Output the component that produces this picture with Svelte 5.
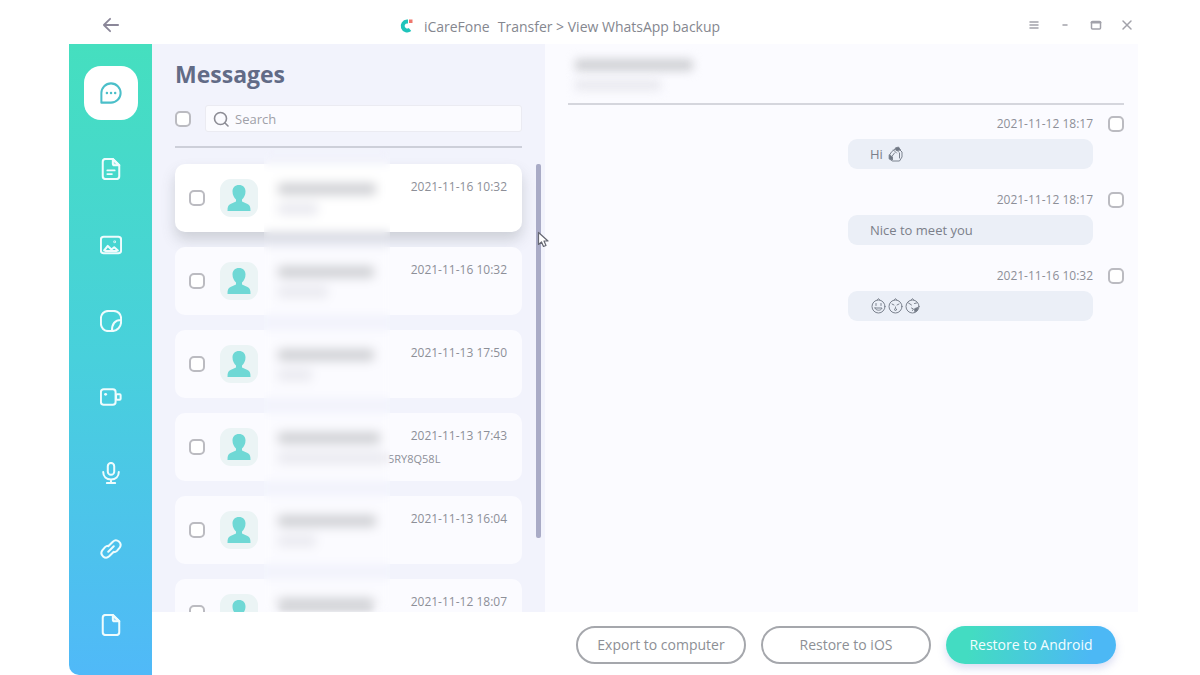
<script>
    let search = $state('');

    const nav = [
        { id: 'messages', label: 'Messages' },
        { id: 'documents', label: 'Documents' },
        { id: 'images', label: 'Images' },
        { id: 'stickers', label: 'Stickers' },
        { id: 'videos', label: 'Videos' },
        { id: 'audio', label: 'Audio' },
        { id: 'links', label: 'Links' },
        { id: 'files', label: 'Files' }
    ];
    let active = $state('messages');

    // name and preview are the widths of the blurred out text
    const chats = [
        { date: '2021-11-16 10:32', name: 98, preview: 40 },
        { date: '2021-11-16 10:32', name: 96, preview: 50 },
        { date: '2021-11-13 17:50', name: 96, preview: 34 },
        { date: '2021-11-13 17:43', name: 102, preview: 108, tail: '5RY8Q58L' },
        { date: '2021-11-13 16:04', name: 98, preview: 38 },
        { date: '2021-11-12 18:07', name: 96, preview: 40 }
    ];
    let selected = $state(0);

    const messages = [
        { date: '2021-11-12 18:17', text: 'Hi', icons: ['wave'] },
        { date: '2021-11-12 18:17', text: 'Nice to meet you', icons: [] },
        { date: '2021-11-16 10:32', text: '', icons: ['smile', 'wow', 'kiss'] }
    ];
</script>

{#snippet navIcon(id)}
    <svg class="nav-icon" viewBox="0 0 24 24" aria-hidden="true">
        {#if id === 'messages'}
            <path d="M1.5 22.5V12A10.5 10.5 0 1 1 12 22.5Z" />
            <path d="M7.5 12h.1M12 12h.1M16.5 12h.1" stroke-width="2.6" />
        {:else if id === 'documents'}
            <path d="M14 1H6A3 3 0 0 0 3 4v16a3 3 0 0 0 3 3h12a3 3 0 0 0 3-3V8Z" />
            <path d="M14 1v5a2 2 0 0 0 2 2h5Z" fill="#effcfd" fill-opacity=".5" />
            <path d="M8 13.5h8M8 17.5h5" stroke-width="2" />
        {:else if id === 'images'}
            <rect x="1" y="3" width="22" height="18" rx="3" />
            <path d="M4.5 18l4-5 4 4 3-2.500 4 3.500M6 18.500h12" />
            <circle cx="16" cy="8.5" r=".4" />
        {:else if id === 'stickers'}
            <path d="M13 23H9a8 8 0 0 1-8-8V9a8 8 0 0 1 8-8h6a8 8 0 0 1 8 8v4c0 5-4 10-10 10ZM13 23c0-7 3-12 10-12" />
        {:else if id === 'videos'}
            <rect x="1" y="3.5" width="16" height="17" rx="3" />
            <rect x="17.5" y="9" width="5" height="6" rx="1" />
            <path d="M6 9h.2" stroke-width="3" />
        {:else if id === 'audio'}
            <rect x="8.5" y="1" width="7" height="13" rx="3.5" />
            <path d="M3.5 11c0 5 3.5 8 8.5 8s8.5-3 8.5-8M12 19v4M7.5 23h9" />
        {:else if id === 'links'}
            <path d="M9 9l5-5a5 5 0 0 1 7.5 6.5l-3 3.5a5 5 0 0 1-4 1.5M15 15l-5 5a5 5 0 0 1-7.5-6.500l3-3.500a5 5 0 0 1 4-1.500M9 15l6-6" />
        {:else}
            <path d="M14 1H6A3 3 0 0 0 3 4v16a3 3 0 0 0 3 3h12a3 3 0 0 0 3-3V8Z" />
            <path d="M14 1v5a2 2 0 0 0 2 2h5Z" fill="#effcfd" fill-opacity=".5" />
        {/if}
    </svg>
{/snippet}

{#snippet emoji(id)}
    <svg class="emoji" viewBox="0 0 16 16" aria-hidden="true">
        {#if id === 'wave'}
            <path d="M4 6L2 9v4l3 2h7l2.500-4V6L12 3.500 8 3ZM7 7L4 11M9 7l-3-3M11 6L9 3M12 7v5" />
            <path d="M8 2l3-1 2 3-4 .5ZM2 9l3 2v3l-3-1Z" fill="#6f7784" />
        {:else}
            <circle cx="8" cy="8.5" r="6.5" />
            <path d="M7 1.5l1-.8 1 .8" />
            {#if id === 'smile'}
                <path d="M5.5 5.5v2M10.5 5.5v2M4.5 10h7c-.5 3-6.500 3-7 0Z" />
            {:else if id === 'wow'}
                <path d="M4.5 6l2 1M11.5 6l-2 1M8 9v.5" />
                <circle cx="8" cy="11.5" r="1" />
            {:else}
                <path d="M4 5l3 2M10 5.5l2-.5M7 10l2 1-1 1.5" />
                <path d="M10.5 10.5l3-1-1 3.500-2 .5Z" fill="#6f7784" />
            {/if}
        {/if}
    </svg>
{/snippet}

<div class="window">
    <header>
        <button class="back" aria-label="Back">
            <svg width="18" height="16" viewBox="0 0 20 18"><path d="M18 9H2M9 2L2 9l7 7" /></svg>
        </button>
        <div class="title">
            <svg class="logo" width="18" height="20" viewBox="0 0 18 20" aria-hidden="true">
                <path d="M10 4.500H9a4.500 4.500 0 1 0 3 8" stroke="#1fc4bb" stroke-width="4" stroke-linecap="butt" />
                <path d="M11 2.500h3.500v3.500H11z" fill="#ee776d" />
            </svg>
            <span>iCareFone</span>
            <span>Transfer &gt; View WhatsApp backup</span>
        </div>
        <div class="controls">
            <button aria-label="Menu"><svg viewBox="0 0 12 12"><path d="M2 3h8M2 6h8M2 9h8" /></svg></button>
            <button aria-label="Minimize"><svg viewBox="0 0 12 12"><path d="M4 6h4" /></svg></button>
            <button aria-label="Maximize"><svg viewBox="0 0 12 12"><rect x="1.5" y="2.5" width="9" height="7.5" rx="1" /><path d="M1.5 3.5h9" stroke-width="2" /></svg></button>
            <button aria-label="Close"><svg viewBox="0 0 12 12"><path d="M2 2l8 8M10 2l-8 8" /></svg></button>
        </div>
    </header>

    <div class="body">
        <nav>
            {#each nav as item}
                <button class:active={active === item.id} aria-label={item.label} onclick={() => active = item.id}>
                    {@render navIcon(item.id)}
                </button>
            {/each}
        </nav>

        <main>
            <div class="panels">
                <section class="list-panel">
                    <h1>Messages</h1>
                    <div class="search-row">
                        <input type="checkbox" aria-label="Select all">
                        <label class="search">
                            <svg width="16" height="16" viewBox="0 0 16 16" aria-hidden="true"><circle cx="7.5" cy="7.5" r="6" /><path d="M12 12L15 15" /></svg>
                            <input type="text" placeholder="Search" aria-label="Search" bind:value={search}>
                        </label>
                    </div>
                    <div class="scroll-area">
                        <div class="chats">
                            {#each chats as chat, i}
                                <article class="chat" class:selected={selected === i}>
                                    <input type="checkbox" aria-label="Select chat {i + 1}">
                                    <svg class="avatar" viewBox="0 0 38 38" aria-hidden="true">
                                        <path d="M19 6c-4 0-6.500 2.500-6.500 6.500 0 3.500 1.500 6 3.500 8v2l-5.500 2.500c-2.500 1-3 3-3 7h23c0-4-.5-6-3-7L22 22.500v-2c2-2 3.500-4.500 3.500-8C25.500 8.500 23 6 19 6Z" />
                                    </svg>
                                    <div class="hidden-text">
                                        <span class="smudge" style:width="{chat.name}px"></span>
                                        <span class="smudge faint" style:width="{chat.preview}px"></span>
                                    </div>
                                    <div class="info">
                                        <time>{chat.date}</time>
                                        {#if chat.tail}<p>{chat.tail}</p>{/if}
                                    </div>
                                </article>
                            {/each}
                            <div class="veil"></div>
                        </div>
                        <div class="scrollbar">
                            <svg class="cursor" width="12" height="17" viewBox="0 0 12 17" aria-hidden="true"><path d="M1.5 1.5v12l3-2.500 2 4.500 2.500-1-2-4.500h4Z" /></svg>
                        </div>
                    </div>
                </section>

                <section class="conversation">
                    <div class="contact">
                        <span class="smudge" style:width="118px"></span>
                        <span class="smudge faint" style:width="86px"></span>
                    </div>
                    {#each messages as msg, i}
                        <div class="message">
                            <div class="meta">
                                <time>{msg.date}</time>
                                <input type="checkbox" aria-label="Select message {i + 1}">
                            </div>
                            <div class="bubble">
                                {#if msg.text}<span>{msg.text}</span>{/if}
                                {#each msg.icons as icon}{@render emoji(icon)}{/each}
                            </div>
                        </div>
                    {/each}
                </section>
            </div>

            <footer>
                <button>Export to computer</button>
                <button>Restore to iOS</button>
                <button class="primary">Restore to Android</button>
            </footer>
        </main>
    </div>
</div>

<style>
    :global(body) {
        background: #fff;
        font-family: "Open Sans", "Noto Sans", sans-serif;
    }

    .window {
        display: flex;
        flex-direction: column;
        height: 100vh;
        box-sizing: border-box;
        padding: 0 62px 0 69px;
        color: #85878f;
    }

    button {
        font: inherit;
        color: inherit;
        background: none;
        border: none;
        padding: 0;
        cursor: pointer;
    }

    svg {
        fill: none;
        stroke-linecap: round;
        stroke-linejoin: round;
        flex: none;
    }

    h1, p {
        margin: 0;
    }

    /* title bar */
    header {
        display: flex;
        align-items: center;
        flex: none;
        height: 44px;
        padding-top: 6px;
        box-sizing: border-box;
    }
    .back {
        display: flex;
        justify-content: center;
        width: 83px;
    }
    .back svg {
        stroke: #8b8799;
        stroke-width: 2;
    }
    .title {
        flex: 1;
        display: flex;
        align-items: center;
        justify-content: center;
        gap: 8px;
        font-size: 14px;
        line-height: 20px;
        padding-top: 3px;
    }
    .controls {
        display: flex;
        justify-content: flex-end;
        gap: 9px;
        width: 172px;
    }
    .controls button {
        display: flex;
        justify-content: center;
        width: 22px;
    }
    .controls svg {
        width: 12px;
        height: 12px;
        stroke: #a2a2aa;
        stroke-width: 1.5;
    }

    .body {
        flex: 1;
        display: flex;
        min-height: 0;
    }

    nav {
        flex: none;
        width: 83px;
        box-sizing: border-box;
        padding-top: 22px;
        display: flex;
        flex-direction: column;
        align-items: center;
        gap: 22px;
        background: linear-gradient(#45dfbf, #48d0dc 50%, #50b9f8);
        border-radius: 0 0 0 10px;
    }
    nav button {
        flex: none;
        display: flex;
        align-items: center;
        justify-content: center;
        width: 54px;
        height: 54px;
        border-radius: 17px;
    }
    nav button.active {
        background: #fff;
    }
    .nav-icon {
        width: 22px;
        height: 22px;
        stroke: #effcfd;
        stroke-width: 2.2;
    }
    .active .nav-icon {
        stroke: #4bbfc9;
    }

    main {
        flex: 1;
        min-width: 0;
        display: flex;
        flex-direction: column;
    }
    .panels {
        flex: 1;
        min-height: 0;
        display: flex;
        overflow: hidden;
        background: #fbfbff;
    }

    input[type="checkbox"] {
        appearance: none;
        flex: none;
        width: 16px;
        height: 16px;
        margin: 0;
        border: 2px solid #bbbbc1;
        border-radius: 5px;
        background: #fff;
    }
    input[type="checkbox"]:checked {
        background: #48d0dc;
    }

    time {
        font-size: 12px;
        line-height: 16px;
        color: #8d8f98;
    }

    /* chat list */
    .list-panel {
        flex: none;
        width: 393px;
        box-sizing: border-box;
        padding: 14px 4px 0 23px;
        background: #f2f3fc;
    }
    h1 {
        font-size: 23px;
        line-height: 32px;
        font-weight: 700;
        color: #626b86;
    }
    .search-row {
        display: flex;
        align-items: center;
        gap: 14px;
        margin-right: 19px;
        padding: 15px 0 14px;
        border-bottom: 2px solid #cdcfd9;
    }
    .search {
        flex: 1;
        display: flex;
        align-items: center;
        gap: 6px;
        height: 27px;
        box-sizing: border-box;
        padding: 0 7px;
        background: #fbfbff;
        border: 1px solid #ebebf2;
        border-radius: 3px;
    }
    .search svg {
        stroke: #8c8c95;
        stroke-width: 1.6;
    }
    .search input {
        flex: 1;
        min-width: 0;
        padding: 0;
        border: none;
        outline: none;
        background: none;
        font: 13px "Open Sans", sans-serif;
        color: #626b86;
    }
    .search input::placeholder {
        color: #9fa0a8;
        opacity: 1;
    }

    .scroll-area {
        display: flex;
        gap: 14px;
        padding-top: 16px;
    }
    .chats {
        position: relative;
        flex: 1;
        display: flex;
        flex-direction: column;
        gap: 15px;
    }
    .chat {
        display: flex;
        align-items: center;
        height: 68px;
        box-sizing: border-box;
        padding: 0 15px 0 14px;
        border-radius: 10px;
        background: #fbfbff;
    }
    .chat.selected {
        background: #fff;
        box-shadow: 0 8px 14px rgba(90, 100, 105, 0.24);
    }
    .avatar {
        width: 38px;
        height: 38px;
        margin-left: 15px;
        border-radius: 11px;
        background: #ebf4f5;
        fill: #6fd8d5;
    }
    .hidden-text {
        flex: none;
        width: 110px;
        height: 42px;
        margin-left: 20px;
        display: flex;
        flex-direction: column;
        gap: 8px;
        padding-top: 6px;
        box-sizing: border-box;
    }
    .smudge {
        height: 12px;
        border-radius: 4px;
        background: #d0d1d5;
        filter: blur(5px);
    }
    .smudge.faint {
        background: #eaeaf0;
    }
    .hidden-text .smudge {
        filter: blur(2px);
    }
    /* frosted strip over the names and previews */
    .veil {
        position: absolute;
        top: -14px;
        bottom: 0;
        left: 89px;
        width: 126px;
        backdrop-filter: blur(5px);
        pointer-events: none;
    }
    .info {
        flex: 1;
        height: 38px;
        display: flex;
        flex-direction: column;
        gap: 7px;
    }
    .info time {
        text-align: right;
    }
    .info p {
        font-size: 11px;
        line-height: 16px;
        color: #8d8f98;
    }
    .scrollbar {
        position: relative;
        flex: none;
        width: 5px;
        height: 374px;
        border-radius: 2px;
        background: #a9abc6;
    }
    .cursor {
        position: absolute;
        z-index: 1;
        left: 1px;
        top: 67px;
        fill: #fff;
        stroke: #666873;
        stroke-width: 1.2;
    }

    /* conversation */
    .conversation {
        flex: 1;
        min-width: 0;
        padding: 0 14px 0 23px;
    }
    .contact {
        display: flex;
        flex-direction: column;
        gap: 8px;
        height: 61px;
        box-sizing: border-box;
        padding: 15px 7px 0;
        border-bottom: 2px solid #d5d6dd;
        margin-bottom: 11px;
    }
    .message {
        display: flex;
        flex-direction: column;
        align-items: flex-end;
        gap: 7px;
        margin-bottom: 23px;
    }
    .meta {
        display: flex;
        align-items: center;
        gap: 15px;
    }
    .bubble {
        display: flex;
        align-items: center;
        width: 245px;
        height: 30px;
        box-sizing: border-box;
        margin-right: 31px;
        padding: 0 22px;
        border-radius: 9px;
        background: #ebeff7;
        font-size: 13px;
        color: #7b7f8a;
    }
    .bubble span {
        margin-right: 4px;
    }
    .emoji {
        width: 17px;
        height: 16px;
        stroke: #7b828e;
        stroke-width: 1;
    }

    footer {
        flex: none;
        display: flex;
        justify-content: flex-end;
        align-items: center;
        gap: 15px;
        height: 63px;
        box-sizing: border-box;
        padding: 2px 22px 0 0;
        background: #fff;
    }
    footer button {
        width: 170px;
        height: 38px;
        border: 2px solid #a5a7ac;
        border-radius: 19px;
        font-size: 14px;
        color: #8d8f95;
    }
    footer .primary {
        border: none;
        color: #f2fdff;
        background: linear-gradient(100deg, #43dcc2 15%, #4cb8f5 85%);
        box-shadow: 0 4px 8px rgba(120, 130, 210, 0.28);
    }
</style>
